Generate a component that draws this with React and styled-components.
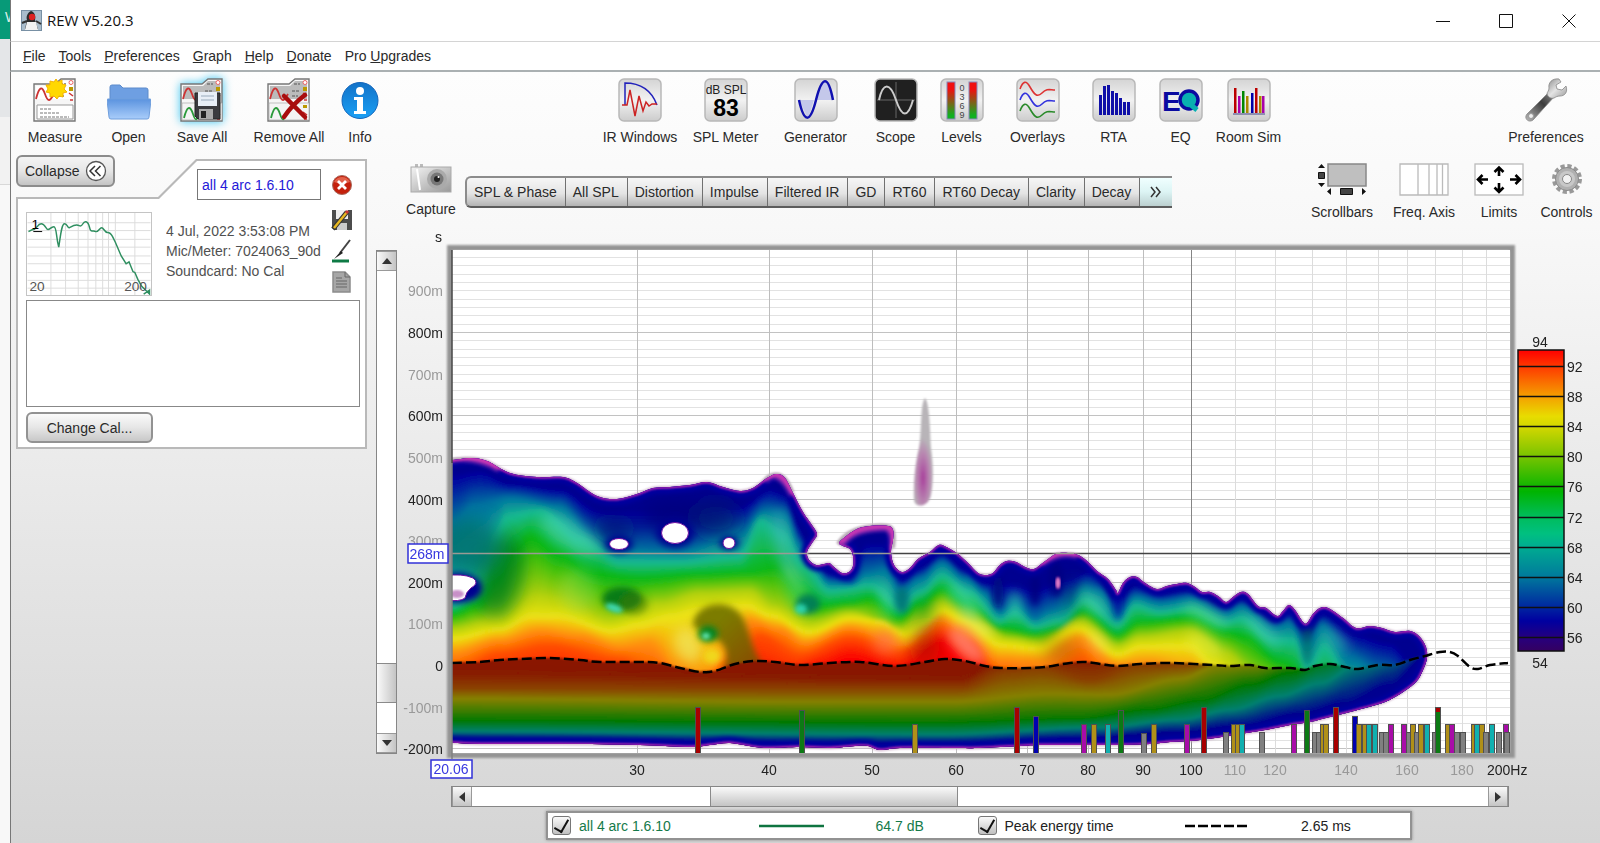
import React, { useState } from "react";
import styled, { createGlobalStyle } from "styled-components";

const MENU = [
    ["", "F", "ile"],
    ["", "T", "ools"],
    ["", "P", "references"],
    ["", "G", "raph"],
    ["", "H", "elp"],
    ["", "D", "onate"],
    ["Pro ", "U", "pgrades"],
];

const TABS = ["SPL & Phase", "All SPL", "Distortion", "Impulse", "Filtered IR", "GD", "RT60", "RT60 Decay", "Clarity", "Decay"];

/* ---------- Icons ---------- */

const MiniFolder = ({ top = "#fff", children }) => (
    <svg width="44" height="44" viewBox="0 0 44 44">
        <path d="M1 43V6h21l6-5h14v42z" fill="#f6f6f6" stroke="#777" strokeWidth="1.4" />
        <path d="M3 8h20l5-5h12v18H3z" fill={top} />
        <path d="M3 21c3-12 6-14 9-5s5 7 9 0" fill="none" stroke="#c33" strokeWidth="1.8" />
        <path d="M27 6h6M25 13h7M25 18h6" stroke="#777" strokeWidth="1.4" strokeDasharray="3 1" />
        <circle cx="38" cy="4.500" r="2" fill="#fff" stroke="#e66" />
        <path d="M36 9h4v4h-4z" fill="#b90" />
        <path d="M36 15l4 3M37 22h3" stroke="#c33" strokeWidth="1.5" />
        {children}
    </svg>
);

const MeasureIcon = () => (
    <MiniFolder>
        <path d="M4 27h36v14H4z" fill="#fff" stroke="#999" />
        <path d="M7 31h12M7 35h20M7 39h29" stroke="#777" strokeDasharray="3 1" />
        <path d="M23 1l2 3 4-2 0 4 4 1-2 4 3 3-4 1 0 4-4-1-2 3-3-3-4 1 0-4-4-1 2-3-2-4 4 0 0-4 4 1z" fill="#ffd800" stroke="#f5b400" />
    </MiniFolder>
);

const GreenWave = () => (
    <g>
        <path d="M2 25h40v17H2z" fill="#f4f4f4" stroke="#aaa" strokeWidth="0.700" />
        <path d="M4 40c3-12 6-13 9-4s4 5 6 0" fill="none" stroke="#2a9a3a" strokeWidth="1.800" />
        <path d="M36 27h4v3h-4z" fill="#b90" />
        <path d="M36 34l4 3M37 41h3" stroke="#c33" strokeWidth="1.500" />
    </g>
);

const SaveIcon = () => (
    <MiniFolder top="#bbb">
        <GreenWave />
        <path d="M15 15h25v26H18l-3-3z" fill="#3a3a3e" stroke="#222" />
        <path d="M18 14h19v14H18z" fill="#e8eef6" />
        <path d="M21 18h13M21 22h13" stroke="#9ab" />
        <path d="M19 31h14v10H19z" fill="#aaa" />
        <path d="M21 33h5v7h-5z" fill="#222" />
    </MiniFolder>
);

const RemoveIcon = () => (
    <MiniFolder top="#bbb">
        <GreenWave />
        <path d="M17 18c7 7 13 13 21 21M38 17c-8 6-15 13-21 22" fill="none" stroke="#a80d0d" strokeWidth="4.500" strokeLinecap="round" />
    </MiniFolder>
);

const OpenIcon = () => (
    <svg width="44" height="44" viewBox="0 0 44 44">
        <defs>
            <linearGradient id="folder" x2="0" y2="1">
                <stop offset="0" stopColor="#5b93df" />
                <stop offset="1" stopColor="#a9cdfa" />
            </linearGradient>
        </defs>
        <path d="M3 24V9q0-2 2-2h8l3 3h23q2 0 2 2v12z" fill="#6e9fe2" stroke="#5c8bcb" />
        <path d="M0 22q0-1 1-1h42q1 0 1 1l-2 17q0 2-2 2H4q-2 0-2-2z" fill="url(#folder)" stroke="#6f9edc" />
    </svg>
);

const InfoIcon = () => (
    <svg width="40" height="44" viewBox="0 0 40 44">
        <defs>
            <linearGradient id="info" x2="0" y2="1">
                <stop offset="0" stopColor="#1272c8" />
                <stop offset="1" stopColor="#1aa0f5" />
            </linearGradient>
        </defs>
        <circle cx="20" cy="22.500" r="18" fill="url(#info)" stroke="#1566bb" />
        <circle cx="20" cy="13" r="4" fill="#fff" />
        <path d="M14 19h9v14h3v3H14v-3h3V22h-3z" fill="#fff" />
    </svg>
);

const Tile = ({ dark, children }) => (
    <svg width="44" height="44" viewBox="0 0 44 44">
        <defs>
            <linearGradient id="tile" x2="0" y2="1">
                <stop offset="0" stopColor="#d4d4d4" />
                <stop offset="0.500" stopColor="#f2f2f2" />
                <stop offset="1" stopColor="#cccccc" />
            </linearGradient>
        </defs>
        <rect x="1" y="1" width="42" height="42" rx="5" fill={dark ? "#202020" : "url(#tile)"} stroke="#b8b8b8" strokeWidth="1.500" />
        {children}
    </svg>
);

const IrIcon = () => (
    <Tile>
        <path d="M7 27V5c14 0 26 6 32 22" fill="none" stroke="#22b" strokeWidth="1.500" />
        <path d="M4 27h5l3-15 5 26 4-20 4 15 3-9 3 4 3-2h5" fill="none" stroke="#c22" strokeWidth="1.500" />
    </Tile>
);

const SplIcon = () => (
    <Tile>
        <text x="22" y="16" textAnchor="middle" fontSize="12" fill="#222">dB SPL</text>
        <text x="22" y="38" textAnchor="middle" fontSize="23" fontWeight="bold" fill="#000">83</text>
    </Tile>
);

const GeneratorIcon = () => (
    <Tile>
        <path d="M5 22h15l-6 18zM23 22C27 4 31 0 34 7l5 15z" fill="#c4c8ea" />
        <path d="M5 22c5 23 11 24 17 0S34-4 39 22" fill="none" stroke="#1010b0" strokeWidth="2.500" />
    </Tile>
);

const ScopeIcon = () => (
    <Tile dark>
        <path d="M3 22h38M22 4v36" stroke="#666" />
        <path d="M5 22c4-18 11-18 17 0s12 18 17 0" fill="none" stroke="#ccc" strokeWidth="2" />
    </Tile>
);

const LevelsIcon = () => (
    <Tile>
        <defs>
            <linearGradient id="level" x2="0" y2="1">
                <stop offset="0.200" stopColor="#f01010" />
                <stop offset="0.900" stopColor="#10b020" />
            </linearGradient>
        </defs>
        <rect x="7" y="4" width="8" height="37" fill="url(#level)" stroke="#88b" />
        <rect x="29" y="4" width="8" height="37" fill="url(#level)" stroke="#88b" />
        {["0", "3", "6", "9"].map((n, i) => (
            <text key={n} x="22" y={13 + i * 9} textAnchor="middle" fontSize="9" fill="#444">{n}</text>
        ))}
    </Tile>
);

const OverlaysIcon = () => (
    <Tile>
        {["#d33", "#33d", "#2a8a2a"].map((color, i) => (
            <path
                key={color}
                transform={`translate(0 ${i * 11})`}
                d="M4 11c3-8 6-9 10-2s7 11 12 6 8-3 13-3"
                fill="none"
                stroke={color}
                strokeWidth="1.600"
            />
        ))}
    </Tile>
);

const RtaIcon = () => (
    <Tile>
        {[20, 29, 30, 24, 22, 17, 13, 13].map((h, i) => (
            <rect key={i} x={7 + i * 4} y={37 - h} width="3" height={h} fill="#1010a8" />
        ))}
    </Tile>
);

const EqIcon = () => (
    <Tile>
        <text x="3" y="33" fontSize="28" fontWeight="bold" fill="#0a0aa0">E</text>
        <circle cx="30" cy="22" r="9" fill="#08b0b0" stroke="#0a0aa0" strokeWidth="3.500" />
        <path d="M32 27l6 5" stroke="#08b0b0" strokeWidth="5" />
    </Tile>
);

const RoomIcon = () => (
    <Tile>
        {[
            [7, 25, "#b00"],
            [11, 17, "#a0a"],
            [15, 22, "#080"],
            [19, 17, "#a80"],
            [24, 20, "#00a"],
            [28, 25, "#b00"],
            [32, 17, "#a80"],
            [35, 17, "#a0a"],
        ].map(([x, h, color]) => (
            <rect key={x} x={x} y={35 - h} width="2.500" height={h} fill={color} />
        ))}
        <path d="M6 36h32" stroke="#448" />
    </Tile>
);

const WrenchIcon = () => (
    <svg width="44" height="44" viewBox="0 0 44 44">
        <defs>
            <linearGradient id="wrenchHead" x2="1" y2="1">
                <stop offset="0" stopColor="#8a8a8a" />
                <stop offset="0.500" stopColor="#e4e4e4" />
                <stop offset="1" stopColor="#9a9a9a" />
            </linearGradient>
            <linearGradient id="wrenchBar" x1="1" x2="0" y2="1">
                <stop offset="0" stopColor="#909090" />
                <stop offset="0.400" stopColor="#3c3c3c" />
                <stop offset="1" stopColor="#b8b8b8" />
            </linearGradient>
        </defs>
        <path d="M25 14L3 36c-4 5 3 10 7 5l20-22z" fill="url(#wrenchBar)" stroke="#888" strokeWidth="0.800" />
        <path
            d="M35 1c-7-1-11 4-10 9 0 3-2 4-2 6 1 3 4 5 7 4 2-1 3-2 6-2 5 0 8-4 6-10l-4 4-5-1-1-4 5-3z"
            fill="url(#wrenchHead)"
            stroke="#888"
            strokeWidth="0.800"
        />
        <circle cx="7" cy="38" r="2.500" fill="#eee" stroke="#999" />
    </svg>
);

const CameraIcon = () => (
    <svg width="42" height="30" viewBox="0 0 42 30">
        <defs>
            <linearGradient id="camera" x2="1" y2="1">
                <stop offset="0" stopColor="#f4f4f4" />
                <stop offset="1" stopColor="#999" />
            </linearGradient>
        </defs>
        <path d="M5 1h3v3H5zM10 1h3v3h-3z" fill="#bbb" />
        <rect x="1" y="4" width="40" height="25" fill="url(#camera)" stroke="#aaa" />
        <path d="M7 6l3 21" stroke="#fff" strokeWidth="2" />
        <circle cx="27" cy="16" r="10" fill="#aaa" />
        <circle cx="27" cy="16" r="6.500" fill="#777" />
        <circle cx="27" cy="16" r="3" fill="#222" />
        <circle cx="28.500" cy="14" r="1" fill="#fff" />
    </svg>
);

const ScrollbarsIcon = () => (
    <svg width="50" height="33" viewBox="0 0 50 33">
        <rect x="11" y="1" width="38" height="22" fill="#bfbfbf" stroke="#888" strokeWidth="1.500" />
        <path d="M1 5h7L4.500 1zM1 20h7l-3.500 4zM14 25v7l-4-3.500zM45 25v7l4-3.500z" fill="#111" />
        <path d="M1.500 9.500h6v6h-6zM23.500 25.500h12v6h-12z" fill="#444" stroke="#111" />
    </svg>
);

const FreqIcon = () => (
    <svg width="50" height="33" viewBox="0 0 50 33">
        <path d="M1 1h48v31H1zM19 1v31M30 1v31M38 1v31M43.500 1v31" fill="#fff" stroke="#bbb" strokeWidth="1.300" />
    </svg>
);

const LimitsIcon = () => (
    <svg width="50" height="33" viewBox="0 0 50 33">
        <rect x="1" y="1" width="48" height="31" fill="#fff" stroke="#bbb" strokeWidth="1.300" />
        <path
            d="M25 5v8M20.500 9L25 4.500 29.500 9M25 20v8M20.500 24.500L25 29l4.500-4.500M5 16.500h9M8.500 12L4 16.500 8.500 21M36 16.500h9M41.500 12l4.500 4.500-4.500 4.500"
            fill="none"
            stroke="#000"
            strokeWidth="2.600"
        />
    </svg>
);

const GearIcon = () => (
    <svg width="32" height="33" viewBox="-16 -16 32 33">
        <circle r="12.500" fill="none" stroke="#999" strokeWidth="5" strokeDasharray="4 2.540" />
        <circle r="11.500" fill="#b0b0b0" stroke="#8a8a8a" />
        <circle r="8" fill="#c8c8c8" />
        <circle r="4.500" fill="#f2f2f2" stroke="#888" />
    </svg>
);

const JavaIcon = () => (
    <svg width="21" height="21" viewBox="0 0 21 21">
        <rect width="21" height="21" fill="#a9bccb" />
        <rect x="0.500" y="0.500" width="20" height="20" fill="none" stroke="#7890a4" />
        <path d="M10 1c4 1 5 6 4 9l3 9H4l2-9c-1-3 0-7 4-9z" fill="#2b2b2b" />
        <path d="M6 12h9l2 8H4z" fill="#f2f2f2" />
        <circle cx="11" cy="7" r="3.200" fill="#d22" />
        <path d="M1 13l5-2M15 11l5 3" stroke="#333" strokeWidth="2" />
    </svg>
);

const CloseIcon = () => (
    <svg width="22" height="22" viewBox="0 0 22 22">
        <circle cx="11" cy="11" r="9.500" fill="#c4200c" stroke="#a8685c" />
        <path d="M3 8a9 9 0 0 1 16 0q-8 3-16 0z" fill="#e2614a" />
        <path d="M7 7l8 8M15 7l-8 8" stroke="#fff" strokeWidth="2.800" />
    </svg>
);

const SaveAsIcon = () => (
    <svg width="22" height="22" viewBox="0 0 22 22">
        <path d="M1 1h20v20H3l-2-2z" fill="#4c4c4c" />
        <path d="M5 1h12v9H5z" fill="#eee" />
        <path d="M6 14h10v7H6z" fill="#ccc" />
        <path d="M2 20L16 3" stroke="#333" strokeWidth="4.500" />
        <path d="M3 19L16 3" stroke="#e8b820" strokeWidth="2.500" />
        <path d="M15 4l2-2" stroke="#c33" strokeWidth="3" />
    </svg>
);

const BrushIcon = () => (
    <svg width="22" height="24" viewBox="0 0 22 24">
        <path d="M19 1L9 14" stroke="#444" strokeWidth="2" />
        <path d="M10 12l-7 8 9-6z" fill="#222" />
        <path d="M1 22h17" stroke="#0e7a45" strokeWidth="3" />
    </svg>
);

const NotesIcon = () => (
    <svg width="22" height="22" viewBox="0 0 22 22">
        <path d="M2 1h12l5 5v15H2z" fill="#a6a6a6" stroke="#8c8c8c" strokeWidth="1.500" />
        <path d="M14 1v5h5M5 7h6M5 10h11M5 13h11M5 16h11" fill="none" stroke="#666" />
    </svg>
);

const LEFT_TOOLS = [
    { label: "Measure", icon: MeasureIcon, width: 88 },
    { label: "Open", icon: OpenIcon, width: 59 },
    { label: "Save All", icon: SaveIcon, width: 88, glow: true },
    { label: "Remove All", icon: RemoveIcon, width: 86 },
    { label: "Info", icon: InfoIcon, width: 56 },
];

const CENTER_TOOLS = [
    { label: "IR Windows", icon: IrIcon, width: 87 },
    { label: "SPL Meter", icon: SplIcon, width: 84 },
    { label: "Generator", icon: GeneratorIcon, width: 96 },
    { label: "Scope", icon: ScopeIcon, width: 64 },
    { label: "Levels", icon: LevelsIcon, width: 68 },
    { label: "Overlays", icon: OverlaysIcon, width: 84 },
    { label: "RTA", icon: RtaIcon, width: 68 },
    { label: "EQ", icon: EqIcon, width: 66 },
    { label: "Room Sim", icon: RoomIcon, width: 70 },
];

const GRAPH_TOOLS = [
    { label: "Scrollbars", icon: ScrollbarsIcon, width: 82 },
    { label: "Freq. Axis", icon: FreqIcon, width: 82 },
    { label: "Limits", icon: LimitsIcon, width: 68 },
    { label: "Controls", icon: GearIcon, width: 67 },
];

/* ---------- Spectrogram data ---------- */

const LEFT = 452;
const RIGHT = 1510;
const TOP = 250;
const BOTTOM = 753;

const freqX = (f) => 1191 + 1059.7 * Math.log10(f / 100);
const timeY = (ms) => 665 - ms * 0.4162;

const OUTLINE = [
    [440, 460], [453, 460], [470, 458], [487, 461], [510, 473], [537, 477], [563, 477], [577, 483], [597, 496], [617, 499], [637, 494],
    [653, 488], [670, 487], [690, 485], [707, 482], [723, 487], [740, 491], [753, 488], [767, 478], [777, 474], [785, 478],
    [793, 493], [803, 512], [814, 528], [817, 535], [812, 543], [807, 552], [809, 560], [816, 565], [824, 564], [829, 563],
    [834, 567], [842, 573], [849, 572], [853, 566], [853, 556], [850, 549], [843, 546], [839, 543], [845, 537], [857, 529],
    [870, 526], [888, 526], [893, 530], [893, 540], [891, 552], [894, 565], [902, 572], [910, 568], [918, 559], [930, 552],
    [937, 546], [942, 545], [950, 549], [958, 554], [968, 563], [978, 573], [986, 575], [993, 573], [1000, 565], [1007, 561],
    [1016, 562], [1025, 567], [1034, 569], [1044, 562], [1056, 554], [1068, 553], [1078, 555], [1087, 561], [1097, 571],
    [1108, 579], [1116, 590], [1118, 593], [1123, 583], [1130, 577], [1137, 577], [1145, 583], [1157, 589], [1167, 586],
    [1177, 584], [1187, 583], [1195, 587], [1202, 592], [1210, 592], [1218, 596], [1226, 602], [1233, 597], [1241, 592],
    [1248, 594], [1258, 606], [1266, 608], [1277, 616], [1283, 611], [1289, 605], [1295, 610], [1303, 622], [1307, 623],
    [1313, 614], [1320, 608], [1328, 608], [1343, 618], [1356, 628], [1370, 626], [1382, 628], [1395, 632], [1410, 631],
    [1419, 636], [1426, 647], [1427, 658], [1423, 670], [1416, 682], [1400, 694], [1385, 702], [1365, 708], [1350, 712],
    [1330, 717], [1310, 722], [1290, 725], [1265, 730], [1240, 734], [1215, 738], [1190, 741], [1170, 742], [1150, 744],
    [1120, 745], [1080, 745], [1040, 745], [1020, 746], [980, 748], [950, 748], [900, 748], [880, 750], [868, 746], [855, 746],
    [830, 748], [800, 747], [770, 748], [755, 747], [730, 743], [710, 745], [690, 747], [640, 745], [560, 744], [480, 744],
    [440, 742],
];

const PEAK = [
    [452, 663], [480, 662], [500, 660], [520, 659], [550, 658], [580, 660], [600, 662], [640, 662], [660, 663], [680, 668],
    [700, 672], [715, 671], [735, 664], [755, 661], [775, 662], [800, 665], [830, 663], [860, 662], [895, 666], [925, 662],
    [945, 659], [965, 661], [985, 666], [1000, 668], [1030, 668], [1045, 667], [1070, 663], [1085, 662], [1100, 664],
    [1118, 666], [1140, 664], [1170, 663], [1213, 665], [1230, 666], [1250, 665], [1265, 668], [1290, 668], [1305, 670],
    [1315, 666], [1330, 664], [1345, 667], [1358, 669], [1378, 665], [1395, 665], [1410, 660], [1425, 656], [1440, 652],
    [1450, 652], [1458, 656], [1470, 667], [1478, 669], [1490, 665], [1508, 663],
];

// Contours of the rising half, from quiet to loud
const UPPER = [
    {
        color: [0, 0, 160],
        points: [
            [452, 476], [480, 472], [510, 484], [560, 490], [600, 512], [640, 512], [680, 512], [740, 508], [770, 490], [785, 495],
            [800, 530], [810, 560], [830, 574], [850, 578], [866, 545], [885, 545], [892, 568], [902, 580], [920, 568], [942, 554],
            [965, 570], [985, 583], [1005, 585], [1035, 590], [1068, 580], [1090, 572], [1117, 600], [1135, 586], [1160, 594],
            [1190, 590], [1226, 607], [1241, 599], [1275, 621], [1289, 612], [1307, 634], [1322, 614], [1355, 636], [1390, 644],
            [1427, 690],
        ],
    },
    {
        color: [0, 116, 160],
        points: [
            [452, 520], [475, 504], [510, 497], [560, 505], [590, 530], [620, 548], [680, 550], [740, 530], [765, 510], [785, 512],
            [800, 545], [830, 582], [852, 585], [866, 572], [885, 568], [900, 590], [920, 578], [942, 562], [965, 578], [985, 592],
            [1000, 612], [1015, 602], [1035, 618], [1050, 610], [1068, 604], [1085, 586], [1100, 590], [1118, 616], [1135, 596],
            [1160, 602], [1190, 598], [1226, 613], [1241, 606], [1275, 627], [1289, 622], [1307, 645], [1322, 624], [1350, 656],
            [1380, 670], [1427, 700],
        ],
    },
    {
        color: [24, 186, 144],
        points: [
            [452, 606], [470, 596], [484, 574], [494, 540], [506, 516], [540, 510], [580, 538], [620, 562], [680, 562], [740, 556],
            [760, 520], [785, 535], [800, 560], [830, 590], [870, 585], [900, 605], [920, 592], [942, 575], [970, 592], [1000, 620],
            [1015, 612], [1035, 626], [1060, 620], [1085, 600], [1118, 624], [1135, 605], [1160, 612], [1190, 608], [1226, 622],
            [1241, 618], [1275, 640], [1295, 640], [1307, 670], [1325, 645], [1350, 684], [1427, 720],
        ],
    },
    {
        color: [12, 184, 20],
        points: [
            [452, 614], [480, 604], [500, 578], [515, 548], [530, 536], [560, 555], [590, 572], [640, 578], [700, 574], [750, 572],
            [775, 566], [800, 595], [820, 606], [850, 603], [870, 598], [900, 618], [920, 604], [942, 590], [970, 607], [1000, 628],
            [1035, 634], [1060, 630], [1083, 612], [1118, 635], [1140, 622], [1190, 618], [1226, 632], [1245, 636], [1280, 662],
            [1320, 690], [1427, 730],
        ],
    },
    {
        color: [176, 208, 10],
        points: [
            [452, 628], [500, 616], [535, 592], [560, 596], [610, 618], [660, 602], [700, 592], [750, 590], [775, 605], [810, 622],
            [850, 612], [900, 628], [920, 617], [942, 602], [975, 622], [1010, 638], [1040, 642], [1080, 620], [1118, 645],
            [1140, 636], [1190, 630], [1226, 652], [1260, 680], [1427, 740],
        ],
    },
    {
        color: [236, 226, 20],
        points: [
            [452, 638], [500, 629], [530, 616], [560, 616], [610, 630], [640, 624], [670, 616], [700, 610], [745, 605], [770, 615],
            [810, 632], [850, 618], [880, 620], [905, 634], [925, 622], [942, 610], [965, 620], [1000, 644], [1040, 648],
            [1078, 628], [1118, 654], [1140, 646], [1190, 645], [1215, 664], [1250, 700], [1427, 745],
        ],
    },
    {
        color: [255, 144, 10],
        points: [
            [452, 652], [500, 640], [540, 630], [580, 635], [620, 646], [650, 642], [680, 668], [700, 680], [725, 655], [750, 620],
            [780, 628], [805, 642], [850, 627], [905, 644], [940, 618], [960, 628], [1000, 658], [1040, 660], [1080, 638],
            [1118, 664], [1150, 662], [1190, 672], [1230, 720], [1427, 750],
        ],
    },
    {
        color: [255, 72, 0],
        points: [
            [452, 672], [500, 654], [550, 646], [620, 660], [660, 680], [700, 692], [730, 668], [760, 636], [800, 655], [850, 638],
            [900, 652], [940, 628], [970, 642], [1000, 676], [1040, 690], [1080, 664], [1110, 690], [1160, 700], [1427, 752],
        ],
    },
    {
        color: [250, 0, 0],
        points: [
            [452, 700], [600, 690], [700, 710], [780, 690], [820, 668], [850, 658], [900, 670], [940, 641], [975, 668], [1010, 710],
            [1427, 753],
        ],
    },
];

// Contours below the energy peak, from loud to quiet
const LOWER = [
    { color: [140, 22, 0], points: [[452, 650], [1427, 650]] },
    { color: [136, 26, 0], points: [[452, 672], [960, 678], [1000, 660], [1427, 640]] },
    { color: [138, 66, 0], points: [[452, 688], [960, 688], [1010, 672], [1040, 669], [1090, 680], [1140, 666], [1427, 640]] },
    { color: [132, 128, 0], points: [[452, 698], [800, 701], [950, 701], [1050, 693], [1110, 694], [1180, 678], [1220, 664], [1427, 640]] },
    { color: [0, 120, 4], points: [[452, 720], [940, 722], [1080, 718], [1150, 709], [1200, 700], [1250, 684], [1290, 672], [1330, 655], [1427, 630]] },
    { color: [0, 128, 112], points: [[452, 731], [940, 734], [1100, 727], [1180, 719], [1230, 709], [1280, 695], [1320, 682], [1360, 662], [1427, 640]] },
    { color: [0, 0, 144], points: [[452, 739], [940, 743], [1080, 738], [1180, 732], [1240, 725], [1300, 713], [1345, 702], [1390, 684], [1427, 655]] },
];

const MODES = [
    [698, 708, "red"], [802, 711, "green"], [915, 725, "gold"], [1017, 708, "red"], [1036, 717, "blue"], [1084, 725, "magenta"],
    [1094, 725, "gold"], [1108, 725, "cyan"], [1121, 711, "green"], [1144, 734, "gray"], [1154, 725, "gold"], [1187, 725, "magenta"],
    [1204, 708, "red"], [1226, 733, "gray"], [1234, 725, "gold"], [1238, 725, "gold"], [1242, 725, "cyan"], [1262, 733, "gray"],
    [1294, 725, "magenta"], [1307, 711, "green"], [1315, 733, "gray"], [1319, 733, "gray"], [1323, 725, "gold"], [1326, 725, "gold"],
    [1336, 708, "red"], [1355, 717, "blue"], [1359, 725, "gold"], [1365, 725, "gold"], [1369, 725, "cyan"], [1375, 725, "cyan"],
    [1382, 733, "gray"], [1386, 733, "gray"], [1391, 725, "magenta"], [1404, 725, "magenta"], [1409, 733, "gray"], [1413, 725, "gold"],
    [1417, 733, "gray"], [1421, 725, "gold"], [1427, 725, "cyan"], [1435, 733, "gray"], [1438, 708, "green"], [1448, 725, "gold"],
    [1452, 725, "magenta"], [1457, 733, "gray"], [1463, 733, "gray"], [1474, 725, "gold"], [1477, 725, "cyan"], [1482, 725, "gold"],
    [1486, 733, "gray"], [1492, 725, "cyan"], [1499, 733, "gray"], [1506, 725, "magenta"], [1507, 733, "gray"],
];

const MODE_COLORS = {
    red: "#a80000",
    green: "#0c7a14",
    gold: "#b09018",
    blue: "#0000b0",
    magenta: "#a80ca8",
    cyan: "#10b0b0",
    gray: "#808080",
};

const X_LABELS = [30, 40, 50, 60, 70, 80, 90, 100, 110, 120, 140, 160, 180];
const Y_LABELS = [900, 800, 700, 600, 500, 400, 300, 200, 100, 0, -100, -200];

const SCALE_STOPS = [
    [0, "#ff0000"], [5, "#ff3400"], [15, "#f59b00"], [22, "#e8dc00"], [26, "#cfd600"], [35, "#7cc400"], [47, "#00b400"],
    [55, "#00bc58"], [61, "#00c080"], [65, "#00ae90"], [75, "#007c9c"], [85, "#002aa0"], [90, "#0000a0"], [96, "#28007c"], [100, "#340060"],
];
const SCALE_MARKS = [92, 88, 84, 80, 76, 72, 68, 64, 60, 56];

/* ---------- Spectrogram drawing ---------- */

const lookup = (points, x) => {
    if (x <= points[0][0]) return points[0][1];
    for (let i = 1; i < points.length; i++) {
        const [x1, y1] = points[i];
        if (x <= x1) {
            const [x0, y0] = points[i - 1];
            const t = (x - x0) / (x1 - x0);
            return y0 + (y1 - y0) * (t * t * (3 - 2 * t));
        }
    }
    return points[points.length - 1][1];
};

// Catmull-Rom curve through the points
const curve = (points) => {
    let d = `M${points[0][0]} ${points[0][1]}`;
    for (let i = 0; i < points.length - 1; i++) {
        const a = points[i - 1] || points[i];
        const b = points[i];
        const c = points[i + 1];
        const e = points[i + 2] || c;
        d += `C${b[0] + (c[0] - a[0]) / 6} ${b[1] + (c[1] - a[1]) / 6} ${c[0] - (e[0] - b[0]) / 6} ${c[1] - (e[1] - b[1]) / 6} ${c[0]} ${c[1]}`;
    }
    return d;
};

const buildBands = (levels, floor) => {
    const bands = [];
    const steps = 10;
    levels.forEach((level, i) => {
        const next = levels[i + 1];
        const count = next ? steps : 1;
        for (let s = 0; s < count; s++) {
            const t = s / steps;
            let d = `M440 ${BOTTOM}`;
            for (let x = 440; x <= 1440; x += 4) {
                const y0 = lookup(level.points, x);
                let y = next ? y0 + (lookup(next.points, x) - y0) * t : y0;
                if (floor) y = Math.max(y, lookup(floor, x));
                d += `L${x} ${y.toFixed(1)}`;
            }
            const color = level.color.map((v, k) => Math.round(next ? v + (next.color[k] - v) * t : v));
            bands.push({ d: `${d}L1440 ${BOTTOM}Z`, fill: `rgb(${color.join(",")})` });
        }
    });
    return bands;
};

const upperBands = buildBands(UPPER);
const lowerBands = buildBands(LOWER, PEAK);
const outlinePath = curve(OUTLINE);
const peakPath = curve(PEAK);

// cx, cy, rx, ry, colour, opacity, rotation
const DEEP = [
    [500, 575, 22, 42, "#007420", 0.7, 12],
    [468, 545, 30, 26, "#007068", 0.75, 0],
    [614, 528, 22, 14, "#001078", 0.7, 0],
    [674, 516, 34, 18, "#00007c", 0.8, 0],
    [716, 518, 24, 18, "#002070", 0.7, 0],
    [925, 650, 14, 16, "#901800", 0.5, 30],
    [1060, 650, 18, 12, "#a06000", 0.5, -20],
    [925, 618, 8, 20, "#008020", 0.5, 25],
    [1072, 600, 6, 20, "#007050", 0.5, 0],
];

const SHADES = [
    [458, 588, 24, 15, "#000090", 1, 0],
    [729, 543, 10, 7, "#000090", 0.9, 0],
    [619, 544, 14, 9, "#000090", 0.9, 0],
    [675, 533, 19, 15, "#000090", 0.9, 0],
    [622, 599, 20, 12, "#007414", 0.9, 0],
    [634, 604, 14, 11, "#407800", 0.5, 0],
    [708, 634, 10, 8, "#008420", 1, 0],
    [808, 604, 12, 10, "#007c58", 0.95, 0],
    [902, 600, 7, 13, "#007478", 0.9, 0],
    [998, 592, 5, 16, "#001080", 0.9, 0],
    [1035, 590, 5, 16, "#000080", 0.9, 0],
    [1056, 580, 8, 17, "#000080", 0.8, 0],
    [1118, 605, 3, 14, "#0018a0", 0.7, 0],
    [1307, 640, 5, 26, "#007860", 0.6, 0],
];

const LIGHTS = [
    [570, 535, 34, 14, "#60e0c0", 0.4, 30],
    [578, 590, 18, 22, "#90e050", 0.35, 0],
    [688, 645, 13, 18, "#f0e860", 0.7, -20],
    [783, 545, 8, 36, "#50c0c0", 0.45, -10],
    [796, 590, 10, 26, "#80e070", 0.45, -20],
    [885, 642, 12, 12, "#ff7050", 0.6, -10],
    [886, 600, 7, 20, "#50e0a0", 0.45, -10],
    [966, 645, 24, 10, "#ff8478", 0.8, 45],
    [964, 600, 22, 9, "#50e0b0", 0.5, 40],
    [975, 624, 22, 7, "#e8f070", 0.6, 35],
    [1015, 605, 5, 14, "#40d0b0", 0.6, 0],
    [1094, 604, 16, 8, "#50d8b0", 0.5, 45],
    [1098, 642, 14, 8, "#f0e060", 0.5, 45],
    [1206, 616, 24, 8, "#60e090", 0.5, 25],
    [1205, 645, 20, 10, "#e8f040", 0.5, 25],
    [1262, 630, 22, 8, "#50d8b0", 0.5, 40],
    [1336, 640, 16, 9, "#30a8b0", 0.5, 35],
];

const SPOTS = [
    [614, 608, 9, 4, "#40e0c0", 0.9, 20],
    [706, 636, 4, 3, "#70f0c0", 1, 0],
    [801, 609, 6, 5, "#30e0c0", 0.8, 0],
];

const Blobs = ({ items }) =>
    items.map(([cx, cy, rx, ry, fill, opacity, angle]) => (
        <ellipse
            key={`${cx}-${cy}`}
            cx={cx}
            cy={cy}
            rx={rx}
            ry={ry}
            fill={fill}
            opacity={opacity}
            transform={`rotate(${angle} ${cx} ${cy})`}
        />
    ));

const Spectrogram = () => {
    const rows = [];
    for (let ms = -200; ms < 1000; ms += 20) rows.push(ms);
    const columns = [];
    for (let f = 30; f <= 190; f += 10) columns.push(f);

    return (
        <ChartSvg viewBox="397 225 1203 560" role="img" aria-label="Spectrogram, 20 to 200 Hz">
            <defs>
                <clipPath id="plotClip">
                    <rect x={LEFT} y={TOP} width={RIGHT - LEFT} height={BOTTOM - TOP} />
                </clipPath>
                <clipPath id="energyClip">
                    <path d={`${outlinePath}Z`} />
                </clipPath>
                <filter id="edge"><feGaussianBlur stdDeviation="1" /></filter>
                <filter id="soft"><feGaussianBlur stdDeviation="2" /></filter>
                <filter id="spot" filterUnits="userSpaceOnUse" x="440" y="440" width="1000" height="320"><feGaussianBlur stdDeviation="3" /></filter>
                <filter id="glow" filterUnits="userSpaceOnUse" x="440" y="440" width="1000" height="320"><feGaussianBlur stdDeviation="6" /></filter>
                <filter id="wide" filterUnits="userSpaceOnUse" x="440" y="440" width="1000" height="320"><feGaussianBlur stdDeviation="9" /></filter>
                <linearGradient id="scale" x2="0" y2="1">
                    {SCALE_STOPS.map(([at, color]) => (
                        <stop key={at} offset={`${at}%`} stopColor={color} />
                    ))}
                </linearGradient>
                <linearGradient id="swirl" x2="1" y2="1">
                    <stop offset="0.300" stopColor="#7c7c00" />
                    <stop offset="1" stopColor="#8a4200" />
                </linearGradient>
                <radialGradient id="plume" gradientUnits="userSpaceOnUse" cx="0" cy="0" r="1" gradientTransform="translate(923 478) scale(10 40)">
                    <stop offset="0" stopColor="#a8409c" />
                    <stop offset="0.600" stopColor="#b884b0" />
                    <stop offset="1" stopColor="#b8b4b8" />
                </radialGradient>
            </defs>

            <rect x="450" y="248" width="1062" height="507" fill="#fff" stroke="#949494" strokeWidth="6" filter="url(#edge)" />
            <rect x={LEFT} y={TOP} width={RIGHT - LEFT} height={BOTTOM - TOP} fill="#fff" />

            <g clipPath="url(#plotClip)">
                {rows.map((ms) => (
                    <path key={ms} d={`M${LEFT} ${Math.round(timeY(ms)) + 0.5}H${RIGHT}`} stroke={ms % 200 === 0 ? "#c2c2c2" : "#e2e2e2"} />
                ))}
                {columns.map((f) => (
                    <path
                        key={f}
                        d={`M${Math.round(freqX(f)) + 0.5} ${TOP}V${BOTTOM}`}
                        stroke={f === 100 ? "#858585" : f > 100 ? "#dcdcdc" : "#bdbdbd"}
                    />
                ))}
                <path d={`M${LEFT} 553.500H${RIGHT}`} stroke="#444" strokeWidth="1.500" />

                <path d={outlinePath} fill="none" stroke="#c8a8c4" strokeWidth="2" filter="url(#edge)" />
                <path d="M440 463C458 458 478 457 496 468M764 482C770 472 784 470 792 492M838 544C845 532 858 528 870 527C892 523 896 527 893 548" fill="none" stroke="#b8acb6" strokeWidth="4" filter="url(#edge)" />
                <g clipPath="url(#energyClip)">
                    <rect x="440" y={TOP} width="1000" height={BOTTOM - TOP} fill="#000090" />
                    <g filter="url(#soft)">
                        {upperBands.map((band, i) => (
                            <path key={i} d={band.d} fill={band.fill} />
                        ))}
                    </g>
                    <g filter="url(#wide)"><Blobs items={DEEP} /></g>
                    <g filter="url(#glow)"><Blobs items={LIGHTS} /></g>
                    <path
                        d="M693 626C693 602 734 594 745 622C752 640 754 656 766 668L722 672C732 652 724 640 706 634Z"
                        fill="url(#swirl)"
                        filter="url(#spot)"
                    />
                    <g filter="url(#spot)"><Blobs items={SHADES} /></g>
                    <g filter="url(#soft)"><Blobs items={SPOTS} /></g>
                    <ellipse cx="712" cy="656" rx="9" ry="8" fill="#f0d81c" filter="url(#spot)" />
                    <g filter="url(#edge)">
                        {lowerBands.map((band, i) => (
                            <path key={i} d={band.d} fill={band.fill} />
                        ))}
                    </g>
                    <path d={outlinePath} fill="none" stroke="#0000a0" strokeWidth="12" filter="url(#soft)" />
                    <path d={outlinePath} fill="none" stroke="#b820b0" strokeWidth="3" filter="url(#edge)" />
                    <path d="M440 460C458 455 478 454 500 468M764 480C770 470 782 470 794 494M840 544C850 530 862 527 888 526Q896 532 894 550M1040 562Q1060 548 1078 554" fill="none" stroke="#c838b4" strokeWidth="8" filter="url(#soft)" />
                </g>

                <g fill="#fff" stroke="#7010a0">
                    <path d="M445 576Q462 573 473 578Q480 583 471 588Q466 592 465 598Q460 602 445 600Z" />
                    <ellipse cx="619" cy="544" rx="9.500" ry="5.500" />
                    <ellipse cx="675" cy="533" rx="13.500" ry="10.500" />
                    <ellipse cx="729" cy="543" rx="6" ry="5.500" />
                </g>
                <ellipse cx="457" cy="594" rx="7" ry="4" fill="#c890c8" filter="url(#edge)" />
                <ellipse cx="1058" cy="583" rx="2.500" ry="6" fill="#e080c8" stroke="#9010a0" filter="url(#edge)" />
                <path
                    d="M925 398C930 404 930 435 931 448C933 462 934 480 931 495C929 507 915 509 914 500C913 480 916 460 919 448C922 432 920 404 925 398Z"
                    fill="url(#plume)"
                    filter="url(#edge)"
                />

                <path d="M452 553.500H808M853 553.500H891M928 553.500H958M1056 553.500H1074" stroke="#9a9a94" strokeWidth="1.500" />
                <path d={peakPath} fill="none" stroke="#000" strokeWidth="2.500" strokeDasharray="10 4" />

                {MODES.map(([x, y, color], i) => (
                    <rect key={i} x={x - 2.5} y={y - 0.5} width="5" height={BOTTOM - y + 2} fill={MODE_COLORS[color]} stroke="#505050" />
                ))}
                <rect x="1436" y="708" width="4" height="4" fill="#a80000" />
            </g>
            <path d="M452 250V463" stroke="#444" strokeWidth="1.500" />
            <path d="M452 463V759" stroke="#808080" strokeWidth="1.500" />

            <AxisText x="442" y="242" $strong textAnchor="end">s</AxisText>
            {Y_LABELS.map((ms) => (
                <AxisText key={ms} x="443" y={Math.round(timeY(ms)) + 6} textAnchor="end" $strong={ms % 200 === 0}>
                    {ms === 0 ? "0" : `${ms}m`}
                </AxisText>
            ))}
            {X_LABELS.map((f) => (
                <AxisText key={f} x={Math.round(freqX(f))} y="775" textAnchor="middle" $strong={f <= 100}>
                    {f}
                </AxisText>
            ))}
            <AxisText x="1487" y="775" $strong>200Hz</AxisText>

            <rect x="408" y="544" width="40" height="19" fill="#fff" stroke="#3030d8" strokeWidth="1.500" />
            <CursorText x="427" y="559" textAnchor="middle">268m</CursorText>
            <rect x="431" y="760" width="41" height="18" fill="#fff" stroke="#3030d8" strokeWidth="1.500" />
            <CursorText x="451" y="774" textAnchor="middle">20.06</CursorText>

            <rect x="1518" y="350" width="46" height="301" fill="url(#scale)" stroke="#111" strokeWidth="1.500" />
            {SCALE_MARKS.map((db, i) => (
                <g key={db}>
                    <path d={`M1518 ${366.5 + Math.round(i * 30.1)}H1564`} stroke="#111" strokeWidth="1.500" />
                    <AxisText x="1567" y={372 + Math.round(i * 30.1)} $strong>{db}</AxisText>
                </g>
            ))}
            <AxisText x="1540" y="347" textAnchor="middle" $strong>94</AxisText>
            <AxisText x="1540" y="668" textAnchor="middle" $strong>54</AxisText>
        </ChartSvg>
    );
};

const Thumbnail = () => (
    <ThumbSvg viewBox="0 0 126 84" role="img" aria-label="all 4 arc 1.6.10 response">
        <path d="M0 10h126M0 18h126M0 27h126M0 35h126M0 44h126M0 52h126M0 61h126M0 69h126M0 77h126M24 0v84M39 0v84M52 0v84M62 0v84M70 0v84M77 0v84M83 0v84M90 0v84M110 0v84" stroke="#dcdcdc" />
        <path
            d="M1 19L5 17C9 18 10 11 14 11S19 17 21 17 24 14 27 14 29 24 32 35C34 22 35 11 38 11S41 16 43 15 49 11 53 13 56 8 60 9 63 17 65 18 68 18 70 19 74 15 76 15 79 20 82 20 86 22 87 24L90 30 96 44 101 52 104 50 108 60 110 61 113 68 117 75 125 83V79L119 83"
            fill="none"
            stroke="#2f8f60"
            strokeWidth="1.500"
        />
        <text x="4" y="16" fontSize="14" fill="#000">1</text>
        <path d="M6 19h9" stroke="#000" />
        <text x="2" y="80" fontSize="14" fill="#555">20</text>
        <text x="99" y="80" fontSize="14" fill="#555">200</text>
    </ThumbSvg>
);

const ToolButton = ({ tool }) => {
    const Icon = tool.icon;
    return (
        <Tool type="button" $width={tool.width} $glow={tool.glow}>
            <Icon />
            {tool.label}
        </Tool>
    );
};

const App = () => {
    const [title, setTitle] = useState("all 4 arc 1.6.10");
    const [notes, setNotes] = useState("");
    const [traceOn, setTraceOn] = useState(true);
    const [peakOn, setPeakOn] = useState(true);

    return (
        <Desktop>
            <GlobalStyle />
            <Backdrop aria-hidden="true">
                <BackdropBar>W</BackdropBar>
                <BackdropTools />
            </Backdrop>
            <Window>
                <TitleBar>
                    <JavaIcon />
                    <Title>REW V5.20.3</Title>
                    <WindowButton type="button" aria-label="Minimize">
                        <svg width="14" height="14"><path d="M0 7.500h14" stroke="#111" /></svg>
                    </WindowButton>
                    <WindowButton type="button" aria-label="Maximize">
                        <svg width="14" height="14"><path d="M.5.500h13v13H.5z" fill="none" stroke="#111" /></svg>
                    </WindowButton>
                    <WindowButton type="button" aria-label="Close">
                        <svg width="14" height="14"><path d="M.5.500l13 13M13.500.500l-13 13" stroke="#111" /></svg>
                    </WindowButton>
                </TitleBar>
                <MenuBar>
                    {MENU.map(([before, key, after]) => (
                        <MenuItem type="button" key={key}>
                            {before}<u>{key}</u>{after}
                        </MenuItem>
                    ))}
                </MenuBar>
                <Body>
                    <Toolbar>
                        <ToolGroup>{LEFT_TOOLS.map((tool) => <ToolButton key={tool.label} tool={tool} />)}</ToolGroup>
                        <ToolGroup>{CENTER_TOOLS.map((tool) => <ToolButton key={tool.label} tool={tool} />)}</ToolGroup>
                        <ToolGroup><ToolButton tool={{ label: "Preferences", icon: WrenchIcon, width: 108 }} /></ToolGroup>
                    </Toolbar>
                    <Columns>
                        <Sidebar>
                            <Collapse type="button">
                                Collapse
                                <svg width="22" height="22" viewBox="0 0 22 22">
                                    <circle cx="11" cy="11" r="9.500" fill="#fff" stroke="#555" strokeWidth="1.300" />
                                    <path d="M10 6l-5 5 5 5M15.500 6l-5 5 5 5" fill="none" stroke="#333" strokeWidth="1.500" />
                                </svg>
                            </Collapse>
                            <PanelEdge>
                                <Panel>
                                    <PanelHead>
                                        <TitleInput aria-label="Measurement name" value={title} onChange={(e) => setTitle(e.target.value)} />
                                        <IconButton type="button" aria-label="Remove measurement"><CloseIcon /></IconButton>
                                    </PanelHead>
                                    <PanelInfo>
                                        <Thumbnail />
                                        <Details>
                                            <span>4 Jul, 2022 3:53:08 PM</span>
                                            <span>Mic/Meter: 7024063_90deg</span>
                                            <span>Soundcard: No Cal</span>
                                        </Details>
                                        <IconColumn>
                                            <IconButton type="button" aria-label="Save measurement"><SaveAsIcon /></IconButton>
                                            <IconButton type="button" aria-label="Trace colour"><BrushIcon /></IconButton>
                                            <IconButton type="button" aria-label="Notes"><NotesIcon /></IconButton>
                                        </IconColumn>
                                    </PanelInfo>
                                    <Notes aria-label="Measurement notes" value={notes} onChange={(e) => setNotes(e.target.value)} />
                                    <CalButton type="button">Change Cal...</CalButton>
                                </Panel>
                            </PanelEdge>
                        </Sidebar>
                        <Main>
                            <GraphHead>
                                <SmallTool type="button" $width={110}><CameraIcon />Capture</SmallTool>
                                <Tabs>
                                    {TABS.map((tab) => <Tab type="button" key={tab}>{tab}</Tab>)}
                                    <MoreTab type="button" aria-label="More graphs">
                                        <svg width="12" height="12" viewBox="0 0 12 12">
                                            <path d="M1 1l4 5-4 5M6 1l4 5-4 5" fill="none" stroke="#333" strokeWidth="1.500" />
                                        </svg>
                                    </MoreTab>
                                </Tabs>
                                <ToolGroup>
                                    {GRAPH_TOOLS.map(({ label, icon: Icon, width }) => (
                                        <SmallTool type="button" key={label} $width={width}><Icon />{label}</SmallTool>
                                    ))}
                                </ToolGroup>
                            </GraphHead>
                            <GraphRow>
                                <ScrollBar $vertical>
                                    <ScrollButton type="button" $vertical aria-label="Scroll up"><svg width="10" height="6"><path d="M5 0l5 6H0z" fill="#333" /></svg></ScrollButton>
                                    <Track $size={394} />
                                    <Thumb $size={38} $vertical />
                                    <Track $size={30} />
                                    <ScrollButton type="button" $vertical aria-label="Scroll down"><svg width="10" height="6"><path d="M5 6l5-6H0z" fill="#333" /></svg></ScrollButton>
                                </ScrollBar>
                                <Spectrogram />
                            </GraphRow>
                            <ScrollBar>
                                <ScrollButton type="button" aria-label="Scroll left"><svg width="6" height="10"><path d="M0 5l6-5v10z" fill="#333" /></svg></ScrollButton>
                                <Track $size={239} />
                                <Thumb $size={247} />
                                <Track $size={532} />
                                <ScrollButton type="button" aria-label="Scroll right"><svg width="6" height="10"><path d="M6 5L0 0v10z" fill="#333" /></svg></ScrollButton>
                            </ScrollBar>
                            <Legend>
                                <LegendLabel $green>
                                    <Check type="checkbox" checked={traceOn} onChange={() => setTraceOn(!traceOn)} />
                                    all 4 arc 1.6.10
                                </LegendLabel>
                                <svg width="65" height="4"><path d="M0 2h65" stroke="#0f7440" strokeWidth="2.500" /></svg>
                                <LegendValue $green>64.7 dB</LegendValue>
                                <LegendLabel>
                                    <Check type="checkbox" checked={peakOn} onChange={() => setPeakOn(!peakOn)} />
                                    Peak energy time
                                </LegendLabel>
                                <svg width="65" height="4"><path d="M0 2h65" stroke="#000" strokeWidth="2.500" strokeDasharray="10 3" /></svg>
                                <LegendValue>2.65 ms</LegendValue>
                            </Legend>
                        </Main>
                    </Columns>
                </Body>
            </Window>
        </Desktop>
    );
};

// Styled Components
const GlobalStyle = createGlobalStyle`
    * {
        box-sizing: border-box;
    }

    body {
        margin: 0;
        background: #f4f4f4;
        color: #2a2a2a;
        font-family: "Liberation Sans", Arial, sans-serif;
        font-size: 14px;
    }

    button, input, textarea {
        font: inherit;
        color: inherit;
    }

    button {
        padding: 0;
        border: none;
        background: none;
    }

    svg {
        display: block;
        flex-shrink: 0;
    }
`;

const Desktop = styled.div`
    display: flex;
    min-height: 100vh;
`;

const Backdrop = styled.div`
    width: 10px;
    flex-shrink: 0;
    overflow: hidden;
    background: linear-gradient(#f2f2f2 67px, #d8d8d8 67px, #d8d8d8 68px, #f8f8f8 68px);
    background-position: 0 117px;
    background-repeat: no-repeat;
`;

const BackdropBar = styled.div`
    height: 39px;
    padding: 9px 0 0 5px;
    background: #079a78;
    color: #d8f0e8;
`;

const BackdropTools = styled.div`
    height: 78px;
    background: #e4e6e8;
`;

const Window = styled.div`
    display: flex;
    flex-direction: column;
    flex: 1;
    min-width: 0;
`;

const TitleBar = styled.header`
    display: flex;
    align-items: center;
    height: 42px;
    padding-left: 10px;
    background: #fff;
    border-left: 1px solid #777;
    border-bottom: 1px solid #d4d4d4;
`;

const Title = styled.h1`
    flex: 1;
    margin: 0 0 2px 5px;
    color: #111;
    font-family: "Open Sans", "Noto Sans", sans-serif;
    font-size: 15px;
    font-weight: 400;
`;

const WindowButton = styled.button`
    display: grid;
    place-items: center;
    width: 63px;
    height: 40px;
`;

const MenuBar = styled.nav`
    display: flex;
    gap: 13px;
    height: 30px;
    padding-left: 12px;
    background: #fff;
    border-left: 1px solid #777;
    border-bottom: 2px solid #aab0b2;
`;

const MenuItem = styled.button`
    white-space: nowrap;
`;

const Body = styled.div`
    flex: 1;
    border-left: 1px solid #777;
    background: linear-gradient(#fdfdfd, #f8f8f8 20%, #d5d5d5);
`;

const Toolbar = styled.div`
    display: flex;
    justify-content: space-between;
    padding-top: 6px;
`;

const ToolGroup = styled.div`
    display: flex;
    flex-shrink: 0;
`;

const Tool = styled.button`
    display: flex;
    flex-direction: column;
    align-items: center;
    gap: 5px;
    width: ${(props) => props.$width}px;
    line-height: 20px;
    white-space: nowrap;

    svg {
        filter: ${(props) => (props.$glow ? "drop-shadow(0 0 5px #38c4f0)" : "none")};
    }
`;

const Columns = styled.div`
    display: flex;
    align-items: flex-start;
`;

const Sidebar = styled.aside`
    width: 365px;
    flex-shrink: 0;
    padding: 8px 9px 0 5px;
`;

const Collapse = styled.button`
    position: relative;
    display: flex;
    align-items: center;
    gap: 6px;
    height: 32px;
    margin-bottom: -28px;
    padding: 0 6px 0 7px;
    border: 2px solid #8c8c8c;
    border-radius: 6px;
    background: linear-gradient(#f4f4f4, #e6e6e6 50%, #c4c4c4);
`;

const PanelEdge = styled.section`
    padding: 2px;
    background: #b9b9b9;
    clip-path: polygon(180px 0, 100% 0, 100% 100%, 0 100%, 0 38px, 142px 38px);
`;

const Panel = styled.div`
    padding: 8px 5px 4px 8px;
    background: #fff;
    clip-path: polygon(179px 0, 100% 0, 100% 100%, 0 100%, 0 38px, 141px 38px);
`;

const PanelHead = styled.div`
    display: flex;
    justify-content: flex-end;
    align-items: center;
    gap: 10px;
    padding-right: 7px;
`;

const TitleInput = styled.input`
    width: 124px;
    height: 31px;
    padding: 0 4px;
    border: 1px solid #777;
    background: #fff;
    color: #2418d8;
`;

const IconButton = styled.button`
    display: block;
`;

const PanelInfo = styled.div`
    display: flex;
    align-items: flex-start;
    margin-top: 9px;
    padding-right: 7px;
`;

const ThumbSvg = styled.svg`
    width: 126px;
    height: 84px;
    margin-top: 3px;
    border: 1px solid #c4c4c4;
`;

const Details = styled.div`
    flex: 1;
    display: flex;
    flex-direction: column;
    min-width: 0;
    margin: 12px 10px 0 14px;
    overflow: hidden;
    color: #505050;
    line-height: 20px;
    white-space: nowrap;
`;

const IconColumn = styled.div`
    display: flex;
    flex-direction: column;
    gap: 8px;
`;

const Notes = styled.textarea`
    display: block;
    width: 100%;
    height: 107px;
    margin-top: 4px;
    border: 1px solid #888;
    background: #fff;
    resize: none;
`;

const CalButton = styled.button`
    display: block;
    width: 127px;
    height: 31px;
    margin-top: 5px;
    border: 2px solid #929292;
    border-radius: 6px;
    background: linear-gradient(#fafafa, #e6e6e6 50%, #c8c8c8);
`;

const Main = styled.main`
    flex: 1;
    min-width: 0;
`;

const GraphHead = styled.div`
    display: flex;
    align-items: flex-start;
    height: 78px;
    padding-top: 16px;
`;

const SmallTool = styled.button`
    display: flex;
    flex-direction: column;
    align-items: center;
    flex-shrink: 0;
    gap: 6px;
    width: ${(props) => props.$width}px;
    line-height: 20px;
    white-space: nowrap;
`;

const Tabs = styled.nav`
    display: flex;
    height: 32px;
    margin: 13px auto 0 -21px;
    border: 2px solid #8c8c8c;
    border-right: none;
    border-bottom: 2px solid #5c5c5c;
    border-radius: 6px 0 0 6px;
    background: linear-gradient(#f6f6f6, #e4e4e4 55%, #b4b4b4);
`;

const Tab = styled.button`
    padding: 0 8px 0 7px;
    border-right: 1px solid #707070;
    white-space: nowrap;
`;

const MoreTab = styled.button`
    display: grid;
    place-items: center;
    width: 32px;
    background: linear-gradient(#f0ffff, #dcf4f4 50%, #bcd0d0);
`;

const GraphRow = styled.div`
    display: flex;
`;

const ChartSvg = styled.svg`
    flex: 1;
    min-width: 0;
    height: auto;
`;

const AxisText = styled.text`
    font-size: 14px;
    fill: ${(props) => (props.$strong ? "#222" : "#999")};
`;

const CursorText = styled.text`
    font-size: 14px;
    fill: #3838e0;
`;

const ScrollBar = styled.div`
    display: flex;
    flex-direction: ${(props) => (props.$vertical ? "column" : "row")};
    flex-shrink: 0;
    ${(props) => (props.$vertical ? "width: 21px;" : "height: 21px;")}
    margin: ${(props) => (props.$vertical ? "25px 0 31px" : "1px 91px 0 75px")};
    border: 1px solid #868686;
    background: #fff;
`;

const ScrollButton = styled.button`
    display: grid;
    place-items: center;
    flex: 0 0 20px;
    border: 1px solid #999;
    border-width: ${(props) => (props.$vertical ? "1px 0" : "0 1px")};
    background: linear-gradient(${(props) => (props.$vertical ? "to right" : "to bottom")}, #fafafa, #c4c4c4);
`;

const Track = styled.div`
    flex: ${(props) => props.$size} 0 0;
`;

const Thumb = styled.div`
    flex: ${(props) => props.$size} 0 0;
    border: 1px solid #8a8a8a;
    border-width: ${(props) => (props.$vertical ? "1px 0" : "0 1px")};
    background: linear-gradient(${(props) => (props.$vertical ? "to right" : "to bottom")}, #fafafa, #c4c4c4);
`;

const Legend = styled.div`
    display: flex;
    align-items: center;
    height: 29px;
    margin: 4px 188px 0 170px;
    padding: 0 59px 0 4px;
    border: 2px solid #929292;
    background: #fff;
    box-shadow: 0 0 3px #888;
`;

const LegendLabel = styled.label`
    display: flex;
    align-items: center;
    gap: 8px;
    width: 207px;
    color: ${(props) => (props.$green ? "#147a4a" : "#222")};
    white-space: nowrap;
`;

const Check = styled.input`
    appearance: none;
    display: grid;
    place-items: center;
    width: 19px;
    height: 19px;
    margin: 0;
    border: 1px solid #777;
    border-radius: 3px;
    background: linear-gradient(#fafafa, #c0c0c0);

    &:checked::after {
        content: "";
        width: 7px;
        height: 13px;
        margin-bottom: 4px;
        border: solid #111;
        border-width: 0 2px 2px 0;
        transform: rotate(30deg);
    }
`;

const LegendValue = styled.span`
    width: 102px;
    margin-left: auto;
    color: ${(props) => (props.$green ? "#147a4a" : "#222")};
    white-space: nowrap;

    &:last-child {
        width: 50px;
    }
`;

export default App;
